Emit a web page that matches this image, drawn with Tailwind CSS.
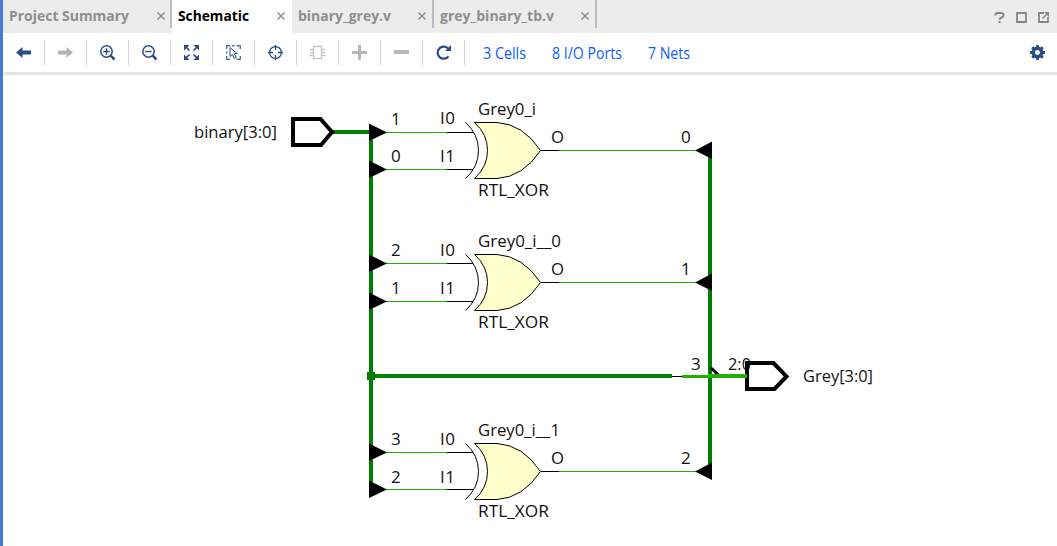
<!DOCTYPE html>
<html lang="en">
<head>
<meta charset="utf-8">
<title>Schematic</title>
<script src="https://cdn.jsdelivr.net/npm/@tailwindcss/browser@4"></script>
</head>
<body class="bg-white">
<div class="flex h-[546px] w-[1057px] flex-col overflow-hidden border-l-3 border-[#4a7bd0] bg-white font-['Open_Sans',sans-serif]">
  <header class="flex h-[33px] shrink-0 bg-[#ececec] text-[#8e8e8e]">
    <div class="flex w-[169px] items-start">
      <svg class="h-[33px] w-[167px]" viewBox="3 0 167 33"><text x="9" y="21" textLength="120" lengthAdjust="spacingAndGlyphs" font-size="15" font-weight="700" fill="currentColor">Project Summary</text><path d="M157.500 12.500l7 7m0-7l-7 7" stroke="#888" stroke-width="1.400"/></svg>
      <i class="h-7 w-0.5 bg-[#bdbdbd]"></i>
    </div>
    <div class="w-[120px] bg-white text-black">
      <svg class="h-[33px] w-[120px]" viewBox="172 0 120 33"><text x="178" y="21" textLength="71" lengthAdjust="spacingAndGlyphs" font-size="15" font-weight="700" fill="currentColor">Schematic</text><path d="M277.500 12.500l7 7m0-7l-7 7" stroke="#888" stroke-width="1.400"/></svg>
    </div>
    <div class="flex w-[142px] items-start">
      <svg class="h-[33px] w-[140px]" viewBox="292 0 140 33"><text x="298" y="21" textLength="93" lengthAdjust="spacingAndGlyphs" font-size="15" font-weight="700" fill="currentColor">binary_grey.v</text><path d="M418.500 12.500l7 7m0-7l-7 7" stroke="#888" stroke-width="1.400"/></svg>
      <i class="h-7 w-0.5 bg-[#bdbdbd]"></i>
    </div>
    <div class="flex w-[163px] items-start">
      <svg class="h-[33px] w-[161px]" viewBox="434 0 161 33"><text x="440" y="21" textLength="114" lengthAdjust="spacingAndGlyphs" font-size="15" font-weight="700" fill="currentColor">grey_binary_tb.v</text><path d="M581.500 12.500l7 7m0-7l-7 7" stroke="#888" stroke-width="1.400"/></svg>
      <i class="h-7 w-0.5 bg-[#bdbdbd]"></i>
    </div>
    <svg class="ml-auto h-[33px] w-[67px]" viewBox="990 0 67 33" fill="none" stroke="#858585" stroke-width="2"><path d="M995.500 15.500v-1q0-1.500 2-1.500h3.500q2.500 0 2.500 2 0 1.500-1.500 2.300-2.500 1-2.500 2.500M999.500 21v2"/><path d="M1017 13h9v9h-9z" stroke-width="1.800"/><path d="M1044 13h-5v9h9v-5" stroke-width="1.800"/><path d="M1042.500 18.500l4-4" stroke-width="1.500"/><path d="M1044 12h5v5z" fill="#858585" stroke="none"/></svg>
  </header>
  <nav class="flex h-[42px] shrink-0 items-start border-b-3 border-[#e5e5e5] pt-[7px] text-[#2d4b85]">
    <div class="h-[25px] w-[42px] border-r border-[#d5d5d5]"><svg class="h-[25px] w-[41px]" viewBox="3 40 41 25"><path d="M16 52.500l6.500-5.500v3.500H31v4h-8.500V58z" fill="currentColor"/></svg></div>
    <div class="h-[25px] w-[42px] border-r border-[#d5d5d5]"><svg class="h-[25px] w-[41px]" viewBox="45 40 41 25"><path d="M73 52.500L66.500 47v3.500H58v4h8.500V58z" fill="#b4b4b4"/></svg></div>
    <div class="h-[25px] w-[42px] border-r border-[#d5d5d5]"><svg class="h-[25px] w-[41px]" viewBox="87 40 41 25" fill="none" stroke="currentColor"><circle cx="106.500" cy="51.500" r="5.700" stroke-width="1.500"/><path d="M103.300 51.500h6.400M106.500 48.300v6.400" stroke-width="1.400"/><path d="M110.700 55.700l3.800 3.800" stroke-width="2.500"/></svg></div>
    <div class="h-[25px] w-[42px] border-r border-[#d5d5d5]"><svg class="h-[25px] w-[41px]" viewBox="129 40 41 25" fill="none" stroke="currentColor"><circle cx="148.500" cy="51.500" r="5.700" stroke-width="1.500"/><path d="M145.300 51.500h6.400" stroke-width="1.400"/><path d="M152.700 55.700l3.800 3.800" stroke-width="2.500"/></svg></div>
    <div class="h-[25px] w-[42px] border-r border-[#d5d5d5]"><svg class="h-[25px] w-[41px]" viewBox="171 40 41 25"><path d="M184 45h5.500L184 50.500zM199 45h-5.500l5.500 5.500zM184 60h5.500L184 54.500zM199 60h-5.500l5.500-5.500z" fill="currentColor"/><path d="M185.500 46.500l4 4m8-4l-4 4m-8 8l4-4m8 4l-4-4" stroke="currentColor" stroke-width="1.700"/></svg></div>
    <div class="h-[25px] w-[42px] border-r border-[#d5d5d5]"><svg class="h-[25px] w-[41px]" viewBox="213 40 41 25" fill="none" stroke="currentColor" stroke-width="1.400"><path d="M226.700 49v-3.300h3.500m6.300 0h3.800V49m0 7v3.300h-3.500m-6.600 0h-3.500V56M232 45.700h2.500M226.700 51.500v2" opacity=".8"/><path d="M230 47.500v9l2.300-2 2 4 2-1-2-3.800h3z" stroke-width="1"/></svg></div>
    <div class="h-[25px] w-[42px] border-r border-[#d5d5d5]"><svg class="h-[25px] w-[41px]" viewBox="255 40 41 25" fill="none" stroke="currentColor" stroke-width="1.300"><circle cx="275.500" cy="52.500" r="5.900"/><path d="M275.500 45v5m0 5v5M268 52.500h5m5 0h5"/></svg></div>
    <div class="h-[25px] w-[42px] border-r border-[#d5d5d5]"><svg class="h-[25px] w-[41px]" viewBox="297 40 41 25" fill="none" stroke="#c6c6c6" stroke-width="1.300"><path d="M313.500 46.500h8v12h-8zM310 49.500h3.500m-3.500 3h3.500m-3.500 3h3.500m8-6h3.500m-3.500 3h3.500m-3.500 3h3.500"/></svg></div>
    <div class="h-[25px] w-[42px] border-r border-[#d5d5d5]"><svg class="h-[25px] w-[41px]" viewBox="339 40 41 25"><path d="M352 52.500h15M359.500 45v15" stroke="#b8b8b8" stroke-width="3"/></svg></div>
    <div class="h-[25px] w-[42px] border-r border-[#d5d5d5]"><svg class="h-[25px] w-[41px]" viewBox="381 40 41 25"><path d="M394 52h15" stroke="#b8b8b8" stroke-width="4"/></svg></div>
    <div class="h-[25px] w-[42px] border-r border-[#d5d5d5]"><svg class="h-[25px] w-[41px]" viewBox="423 40 41 25"><path d="M448.500 56.300A6 6 0 1 1 448 48.500" fill="none" stroke="currentColor" stroke-width="2.200"/><path d="M451 45v6h-6z" fill="currentColor"/></svg></div>
    <svg class="h-[25px] w-[240px]" viewBox="465 40 240 25" font-size="15.500" fill="#0a5cff"><text x="483" y="59" textLength="43" lengthAdjust="spacingAndGlyphs">3 Cells</text><text x="552" y="59" textLength="70" lengthAdjust="spacingAndGlyphs">8 I/O Ports</text><text x="648" y="59" textLength="42" lengthAdjust="spacingAndGlyphs">7 Nets</text></svg>
    <svg class="ml-auto h-[25px] w-[37px]" viewBox="1020 40 37 25" fill="none" stroke="currentColor"><circle cx="1037.500" cy="52.500" r="4.200" stroke-width="3.400"/><path d="M1037.500 45v3m0 9v3m-7.500-7.500h3m9 0h3M1032.200 47.200l2 2m6.600 6.600l2 2m0-10.600l-2 2m-6.600 6.600l-2 2" stroke-width="2.800"/></svg>
  </nav>
  <main class="h-[471px]">
    <svg class="h-[471px] w-[1054px]" viewBox="3 75 1054 471" font-size="17" fill="#111">
      <defs>
        <g id="gate">
          <path d="M474.500 122.500H497Q523 124 540.500 150.500Q523 177 497 178.500H474.500Q487.500 167 487.500 150.500T474.500 122.500z" fill="#ffffcc" stroke="#000"/>
          <path d="M465.500 122.500Q478.500 134 478.500 150.500T465.500 178.500" fill="none" stroke="#000"/>
          <path d="M541 150.500h18" stroke="#000"/>
          <path d="M559 150.500h137" stroke="#1fb000"/>
          <text x="478" y="196" textLength="71" lengthAdjust="spacingAndGlyphs">RTL_XOR</text>
          <text x="551" y="143" textLength="13" lengthAdjust="spacingAndGlyphs">O</text>
        </g>
        <g id="pin"><path d="M386 .5h61" stroke="#1fb000"/><path d="M447 .5h26" stroke="#000"/></g>
        <path id="tapl" d="M369-8.500L387 .5L369 9z" fill="#000"/>
        <path id="tapr" d="M712-8.500L695 .5L712 9z" fill="#000"/>
      </defs>
      <g fill="none" stroke="#008000" stroke-width="4">
        <path d="M333 132h38V489M371 376H672M710 150V471"/>
      </g>
      <path d="M367 372h8v8h-8z" fill="#008000"/>
      <path d="M672 376.500h10" stroke="#000"/>
      <path d="M682 376.500h27" stroke="#1fb000" stroke-width="3"/>
      <text x="728" y="370" textLength="23" lengthAdjust="spacingAndGlyphs">2:0</text>
      <path d="M710.500 367.500l8 7.500" stroke="#000" stroke-width="3"/>
      <path d="M708 376h39" stroke="#1fb000" stroke-width="4"/>
      <path d="M293 119h27.500L332 132L321 145H293zM747 363h26.500L786.500 376.500L774.500 389H747z" fill="none" stroke="#000" stroke-width="4"/>
      <path d="M745 374h2v4h-2z" fill="#1fb000"/>
      <use href="#gate"/><use href="#gate" y="132"/><use href="#gate" y="321"/>
      <use href="#pin" y="132"/><use href="#pin" y="169"/><use href="#pin" y="263"/><use href="#pin" y="301"/><use href="#pin" y="452"/><use href="#pin" y="489"/>
      <use href="#tapl" y="132"/><use href="#tapl" y="169"/><use href="#tapl" y="263"/><use href="#tapl" y="301"/><use href="#tapl" y="452"/><use href="#tapl" y="489"/>
      <use href="#tapr" y="150"/><use href="#tapr" y="282"/><use href="#tapr" y="471"/>
      <text x="194" y="138" textLength="83" lengthAdjust="spacingAndGlyphs">binary[3:0]</text>
      <text x="803" y="382" textLength="70" lengthAdjust="spacingAndGlyphs">Grey[3:0]</text>
      <text x="478" y="115" textLength="58" lengthAdjust="spacingAndGlyphs">Grey0_i</text>
      <text x="478" y="247" textLength="83" lengthAdjust="spacingAndGlyphs">Grey0_i__0</text>
      <text x="478" y="436" textLength="82" lengthAdjust="spacingAndGlyphs">Grey0_i__1</text>
      <text x="391" y="125">1</text><text x="391" y="162">0</text><text x="391" y="256">2</text><text x="391" y="294">1</text><text x="391" y="445">3</text><text x="391" y="483">2</text>
      <text x="440" y="124" textLength="15">I0</text><text x="440" y="162" textLength="15">I1</text><text x="440" y="256" textLength="15">I0</text><text x="440" y="294" textLength="15">I1</text><text x="440" y="445" textLength="15">I0</text><text x="440" y="483" textLength="15">I1</text>
      <text x="681" y="143">0</text><text x="681" y="275">1</text><text x="681" y="464">2</text><text x="691" y="370">3</text>
    </svg>
  </main>
</div>
</body>
</html>
